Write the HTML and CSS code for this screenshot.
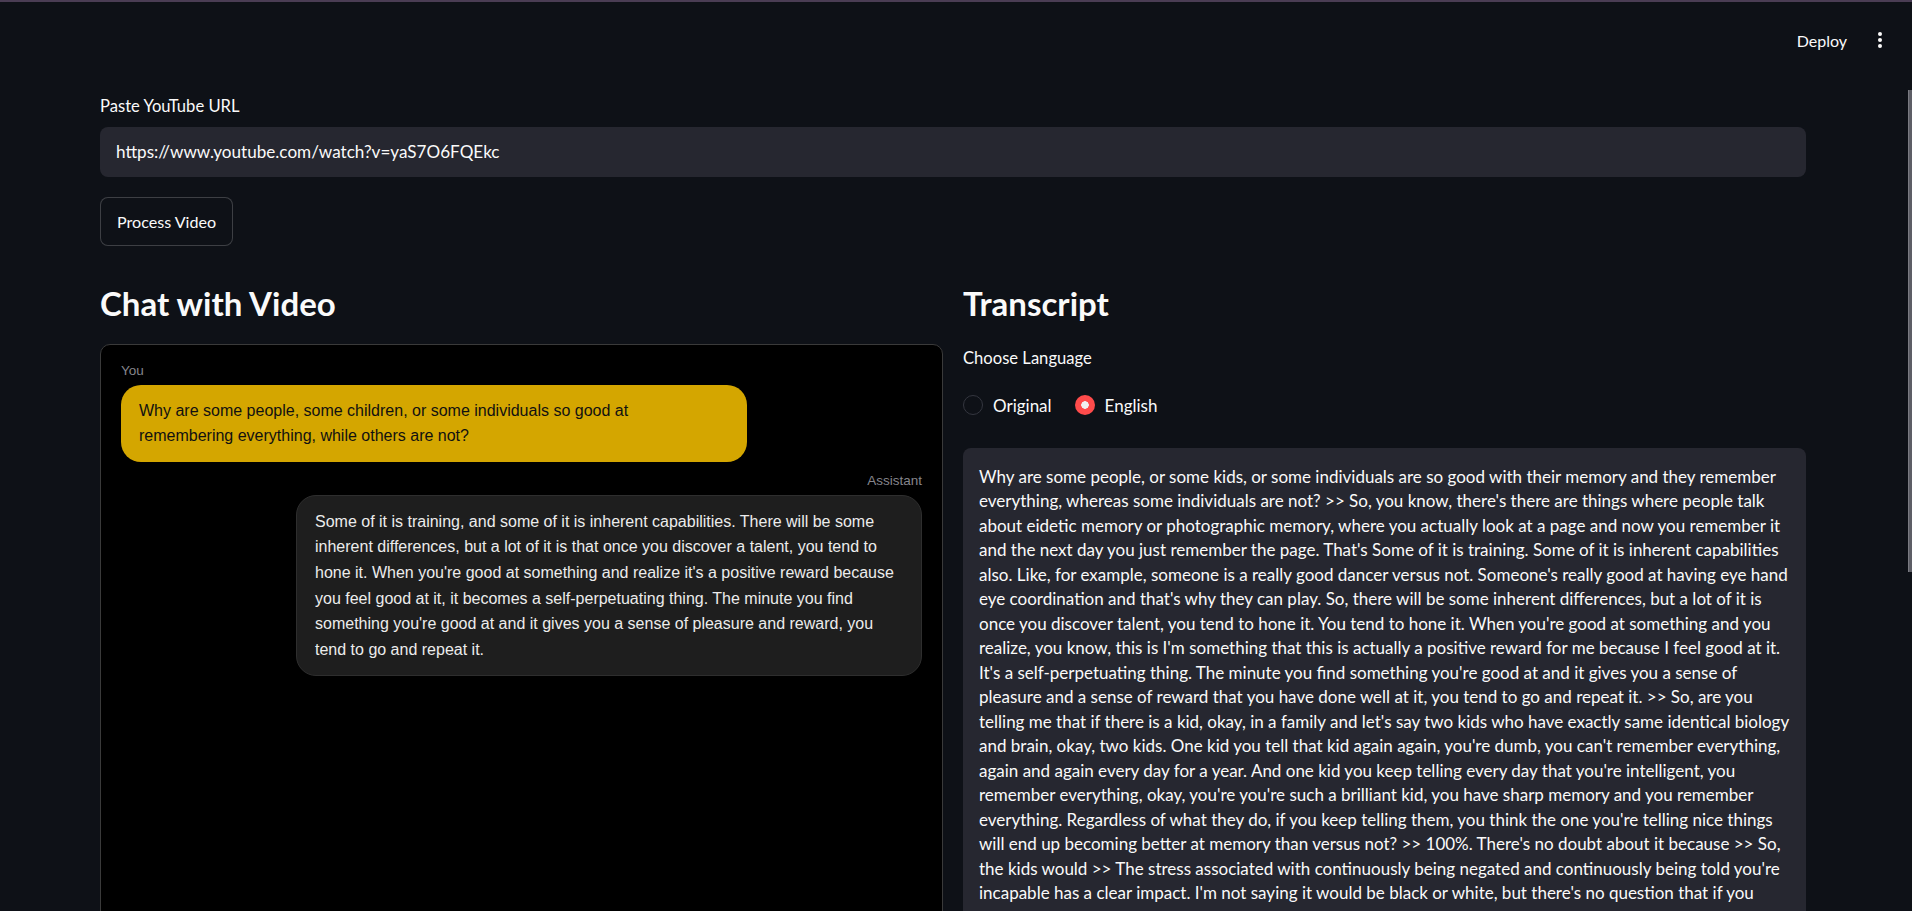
FILE: index.html
```html
<!DOCTYPE html>
<html lang="en">
<head>
<meta charset="utf-8">
<title>Chat with Video</title>
<link rel="stylesheet" href="styles.css">
</head>
<body>
<div class="topline"></div>
<header class="header">
  <span class="deploy">Deploy</span>
  <span class="kebab" aria-label="menu"><i></i><i></i><i></i></span>
</header>
<main class="main">
  <label class="label" for="url">Paste YouTube URL</label>
  <div class="input" id="url">https://www.youtube.com/watch?v=yaS7O6FQEkc</div>
  <button class="btn">Process Video</button>

  <div class="cols">
    <section class="col">
      <h2 class="h2">Chat with Video</h2>
      <div class="chat">
        <div class="msg msg-user">
          <div class="who">You</div>
          <div class="bubble bubble-user">Why are some people, some children, or some individuals so good at remembering everything, while others are not?</div>
        </div>
        <div class="msg msg-bot">
          <div class="who">Assistant</div>
          <div class="bubble bubble-bot">Some of it is training, and some of it is inherent capabilities. There will be some inherent differences, but a lot of it is that once you discover a talent, you tend to hone it. When you're good at something and realize it's a positive reward because you feel good at it, it becomes a self-perpetuating thing. The minute you find something you're good at and it gives you a sense of pleasure and reward, you tend to go and repeat it.</div>
        </div>
      </div>
    </section>

    <section class="col">
      <h2 class="h2">Transcript</h2>
      <div class="label lang-label">Choose Language</div>
      <div class="radios">
        <span class="radio"><span class="dot"></span>Original</span>
        <span class="radio radio-on"><span class="dot"></span>English</span>
      </div>
      <div class="transcript">Why are some people, or some kids, or some individuals are so good with their memory and they remember<br>
everything, whereas some individuals are not? &gt;&gt; So, you know, there's there are things where people talk<br>
about eidetic memory or photographic memory, where you actually look at a page and now you remember it<br>
and the next day you just remember the page. That's Some of it is training. Some of it is inherent capabilities<br>
also. Like, for example, someone is a really good dancer versus not. Someone's really good at having eye hand<br>
eye coordination and that's why they can play. So, there will be some inherent differences, but a lot of it is<br>
once you discover talent, you tend to hone it. You tend to hone it. When you're good at something and you<br>
realize, you know, this is I'm something that this is actually a positive reward for me because I feel good at it.<br>
It's a self-perpetuating thing. The minute you find something you're good at and it gives you a sense of<br>
pleasure and a sense of reward that you have done well at it, you tend to go and repeat it. &gt;&gt; So, are you<br>
telling me that if there is a kid, okay, in a family and let's say two kids who have exactly same identical biology<br>
and brain, okay, two kids. One kid you tell that kid again again, you're dumb, you can't remember everything,<br>
again and again every day for a year. And one kid you keep telling every day that you're intelligent, you<br>
remember everything, okay, you're you're such a brilliant kid, you have sharp memory and you remember<br>
everything. Regardless of what they do, if you keep telling them, you think the one you're telling nice things<br>
will end up becoming better at memory than versus not? &gt;&gt; 100%. There's no doubt about it because &gt;&gt; So,<br>
the kids would &gt;&gt; The stress associated with continuously being negated and continuously being told you're<br>
incapable has a clear impact. I'm not saying it would be black or white, but there's no question that if you</div>
    </section>
  </div>
</main>
<div class="scrollthumb"></div>
</body>
</html>
```

FILE: styles.css
```css
html, body {
  margin: 0;
  padding: 0;
  height: 911px;
  overflow: hidden;
}
body {
  background: #0e1117;
  color: #fafafa;
  font-family: Lato, "Noto Sans", sans-serif;
}
.topline {
  height: 2px;
  background: #4a3d54;
}
.header {
  height: 76px;
  display: flex;
  align-items: center;
  justify-content: flex-end;
  padding-right: 30px;
}
.deploy {
  font-size: 16px;
  margin-right: 31px;
  color: #fafafa;
}
.kebab {
  display: flex;
  flex-direction: column;
  gap: 2.3px;
}
.kebab i {
  display: block;
  width: 4px;
  height: 4px;
  border-radius: 50%;
  background: #fafafa;
}
.main {
  padding: 17px 106px 0 100px;
  display: flex;
  flex-direction: column;
  align-items: flex-start;
}
.label {
  display: block;
  font-size: 16.6px;
  line-height: 23.8px;
  color: #fafafa;
}
.input {
  box-sizing: border-box;
  margin-top: 8px;
  width: 100%;
  height: 50px;
  background: #262730;
  border-radius: 8px;
  padding: 0 16px;
  display: flex;
  align-items: center;
  font-size: 17.1px;
  color: #fafafa;
}
.btn {
  margin-top: 20px;
  height: 49px;
  padding: 0 16px;
  background: #0e1117;
  border: 1px solid rgba(250, 250, 250, 0.2);
  border-radius: 8px;
  color: #fafafa;
  font-family: inherit;
  font-size: 16.1px;
}
.cols {
  width: 100%;
  margin-top: 37px;
  display: grid;
  grid-template-columns: 1fr 1fr;
  gap: 20px;
}
.col {
  min-width: 0;
}
.h2 {
  margin: 0;
  font-size: 33px;
  line-height: 40.8px;
  font-weight: 700;
  color: #fafafa;
}
.chat {
  margin-top: 20px;
  min-height: 700px;
  background: #000;
  border: 1px solid #3a3a3a;
  border-radius: 10px;
  padding: 18px 20px;
  display: flex;
  flex-direction: column;
  gap: 11px;
  font-family: "Liberation Sans", Arial, sans-serif;
}
.msg {
  display: flex;
  flex-direction: column;
}
.msg-user {
  align-items: flex-start;
}
.msg-bot {
  align-items: flex-end;
}
.who {
  font-size: 13.5px;
  line-height: 16px;
  color: #85858c;
  margin-bottom: 6px;
}
.bubble {
  box-sizing: border-box;
  width: 626px;
  padding: 13px 24px 13px 18px;
  border-radius: 20px;
  font-size: 16px;
  line-height: 25.6px;
}
.bubble-user {
  background: #d4a600;
  color: #111;
}
.bubble-bot {
  background: #1e1e1e;
  border: 1px solid #2e2e2e;
  color: #ececec;
}
.lang-label {
  margin-top: 23px;
}
.radios {
  margin-top: 25px;
  display: flex;
  gap: 23px;
  height: 20px;
  align-items: center;
}
.radio {
  display: flex;
  align-items: center;
  gap: 10px;
  font-size: 17px;
}
.dot {
  box-sizing: border-box;
  width: 20px;
  height: 20px;
  border-radius: 50%;
  border: 1.5px solid #34363f;
  background: #0e1117;
}
.radio-on .dot {
  border: none;
  background: radial-gradient(circle, #f0f0f0 0 3.5px, #ff4b4b 4px);
}
.transcript {
  margin-top: 33px;
  background: #262730;
  border-radius: 8px;
  padding: 16.5px 4px 40px 16px;
  font-size: 17px;
  line-height: 24.5px;
  color: #fafafa;
}
.scrollthumb {
  position: fixed;
  right: 0;
  top: 90px;
  width: 3px;
  height: 482px;
  background: #5d5e66;
  border-left: 1px solid #7a7b82;
}
```
